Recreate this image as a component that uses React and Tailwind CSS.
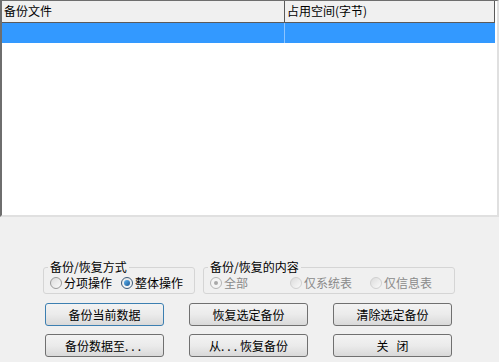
const font = { fontFamily: '"Noto Sans CJK SC", "Liberation Sans", sans-serif' };

function Radio({ checked, disabled }) {
  if (checked && disabled) {
    return (
      <span className="flex h-[12px] w-[12px] items-center justify-center rounded-full border border-[#b5b5b5] bg-[#f4f4f4]">
        <span className="h-[4px] w-[4px] rounded-full bg-[#a8a8a8]" />
      </span>
    );
  }
  if (checked) {
    return (
      <span className="flex h-[12px] w-[12px] items-center justify-center rounded-full border border-[#3c5a78] bg-gradient-to-b from-[#e8e8e8] to-[#f8f8f8]">
        <span className="h-[6px] w-[6px] rounded-full bg-gradient-to-br from-[#5fb4f0] to-[#1a5a96]" />
      </span>
    );
  }
  return (
    <span
      className={
        'h-[12px] w-[12px] rounded-full border bg-gradient-to-br from-[#dcdcdc] to-[#fafafa] ' +
        (disabled ? 'border-[#d0d0d0]' : 'border-[#9a9a9a]')
      }
    />
  );
}

function Option({ label, checked, disabled, width }) {
  return (
    <div className={'flex items-center gap-[2px] ' + width}>
      <Radio checked={checked} disabled={disabled} />
      <span className={'text-[12px] leading-[14px] ' + (disabled ? 'text-[#8a8a8a]' : 'text-black')}>{label}</span>
    </div>
  );
}

function Btn({ children, focused }) {
  return (
    <button
      className={
        'h-[23px] w-[119px] rounded-[3px] border bg-gradient-to-b from-[#f3f3f3] via-[#ebebeb] to-[#d9d9d9] text-[12px] leading-[14px] text-black ' +
        (focused ? 'border-[#3c7fb1]' : 'border-[#707070]')
      }
    >
      {children}
    </button>
  );
}

const Dots = () => <span className="tracking-[3px]">...</span>;

export default function App() {
  return (
    <div className="h-[362px] w-[499px] overflow-hidden bg-[#f0f0f0]" style={font}>
      <div className="h-[217px] w-[499px] border-t border-l-2 border-r-2 border-b-2 border-t-[#6e6e6e] border-l-[#6e6e6e] border-r-[#e0e0e0] border-b-[#e0e0e0] bg-white pr-[2px]">
        <div className="flex h-[22px] border-b border-[#5a5a5a] bg-[#f0f0f0] text-[12px] leading-[14px] text-black">
          <div className="w-[283px] border-r border-[#5a5a5a] pl-[2px] pt-[3px]">备份文件</div>
          <div className="w-[210px] border-r border-[#5a5a5a] pl-[2px] pt-[3px]">占用空间(字节)</div>
        </div>
        <div className="flex h-[20px] w-[493px] bg-[#3399ff]">
          <div className="w-[283px] border-r border-[#8cc4ff]" />
        </div>
      </div>

      <div className="flex gap-[8px] pl-[43px] pt-[43px]">
        <fieldset className="h-[34px] w-[152px] rounded-[3px] border border-[#d5d5d5] px-[6px]">
          <legend className="ml-[-2px] px-[2px] text-[12px] leading-[14px] text-black">备份/恢复方式</legend>
          <div className="mt-[2px] flex">
            <Option label="分项操作" width="w-[71px]" />
            <Option label="整体操作" checked />
          </div>
        </fieldset>
        <fieldset className="h-[34px] w-[252px] rounded-[3px] border border-[#d5d5d5] px-[6px]">
          <legend className="ml-[-2px] px-[2px] text-[12px] leading-[14px] text-black">备份/恢复的内容</legend>
          <div className="mt-[2px] flex">
            <Option label="全部" checked disabled width="w-[80px]" />
            <Option label="仅系统表" disabled width="w-[80px]" />
            <Option label="仅信息表" disabled />
          </div>
        </fieldset>
      </div>

      <div className="mt-[9px] grid w-fit grid-cols-3 gap-x-[25px] gap-y-[8px] pl-[45px]">
        <Btn focused>备份当前数据</Btn>
        <Btn>恢复选定备份</Btn>
        <Btn>清除选定备份</Btn>
        <Btn>备份数据至<Dots /></Btn>
        <Btn>从<Dots />恢复备份</Btn>
        <Btn>关&nbsp;&nbsp;&nbsp;闭</Btn>
      </div>
    </div>
  );
}
